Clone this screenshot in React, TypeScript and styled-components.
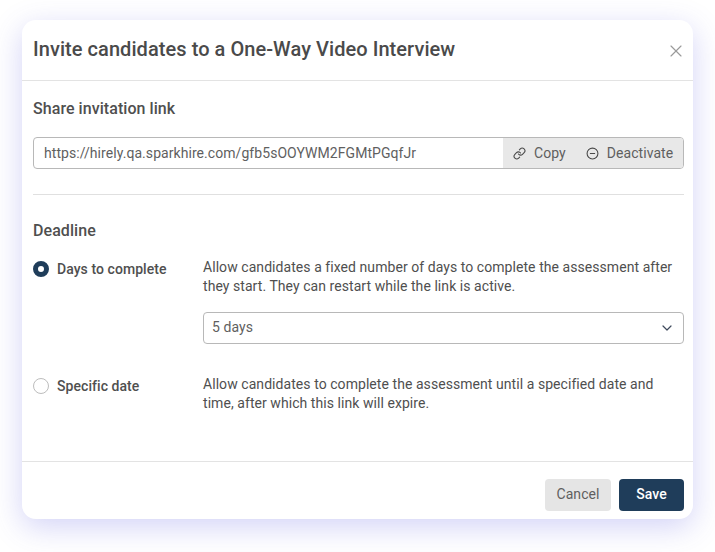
import React from "react";
import styled, { createGlobalStyle } from "styled-components";
import { ChevronDown, CircleMinus, Link, X } from "lucide-react";

const GlobalStyle = createGlobalStyle`
  html, body {
    margin: 0;
    background: #fff;
    font-family: Roboto, "Liberation Sans", sans-serif;
    letter-spacing: 0.06px;
    color: #454545;
  }
  * { box-sizing: border-box; }
`;

const Page = styled.div`
  width: 715px;
  height: 552px;
  padding: 20px 22px 33px;
  overflow: hidden;
`;

const Modal = styled.div`
  display: flex;
  flex-direction: column;
  width: 671px;
  height: 499px;
  background: #fff;
  border-radius: 14px;
  box-shadow: 0 8px 30px rgba(80, 80, 225, 0.25);
`;

const Header = styled.header`
  display: flex;
  align-items: center;
  justify-content: space-between;
  height: 61px;
  padding: 0 7px 3px 11px;
  border-bottom: 1px solid #e3e3e3;
`;

const Title = styled.h1`
  margin: 0;
  font-size: 20px;
  line-height: 28px;
  font-weight: 500;
  letter-spacing: inherit;
  color: #4a4a4a;
`;

const CloseButton = styled.button`
  display: flex;
  padding: 0;
  margin-top: 4px;
  border: 0;
  background: none;
  color: #9a9a9a;
`;

const Body = styled.main`
  flex: 1;
  padding: 18px 9px 0 11px;
`;

const SectionTitle = styled.h2`
  margin: 0;
  font-size: 16px;
  line-height: 20px;
  font-weight: 500;
  color: #4f4f4f;
`;

const LinkField = styled.div`
  display: flex;
  height: 32px;
  margin-top: 18px;
  border: 1px solid #b8b8b8;
  border-radius: 4px;
  overflow: hidden;
  font-size: 14px;
`;

const LinkText = styled.div`
  flex: 1;
  padding-left: 10px;
  line-height: 30px;
  color: #5f5f5f;
`;

const LinkActions = styled.div`
  display: flex;
  align-items: center;
  gap: 20px;
  width: 180px;
  padding-left: 10px;
  background: #e8e8e8;
`;

const LinkAction = styled.span`
  display: flex;
  align-items: center;
  gap: 8px;
  color: #5f5f5f;
`;

const Divider = styled.hr`
  height: 1px;
  margin: 25px 0 26px;
  border: 0;
  background: #e0e0e0;
`;

const OptionRow = styled.div<{ $top: number }>`
  display: grid;
  grid-template-columns: 170px 1fr;
  margin-top: ${({ $top }) => $top}px;
`;

const OptionLabel = styled.label`
  display: flex;
  align-items: center;
  gap: 8px;
  height: 22px;
  font-size: 14px;
  font-weight: 500;
  color: #4f4f4f;
`;

const Radio = styled.span<{ $checked?: boolean }>`
  width: 16px;
  height: 16px;
  border-radius: 50%;
  background: #fff;
  border: ${({ $checked }) =>
    $checked ? "5px solid #1f3d5a" : "1px solid #bdbdbd"};
`;

const OptionText = styled.p`
  margin: 0;
  font-size: 14px;
  line-height: 19px;
  color: #4f4f4f;
`;

const Select = styled.div`
  display: flex;
  align-items: center;
  justify-content: space-between;
  height: 32px;
  margin-top: 16px;
  padding: 0 8px 2px 8px;
  border: 1px solid #b8b8b8;
  border-radius: 4px;
  font-size: 14px;
  color: #5f5f5f;
`;

const Footer = styled.footer`
  display: flex;
  justify-content: flex-end;
  gap: 8px;
  height: 58px;
  padding: 17px 9px 0 0;
  border-top: 1px solid #e3e3e3;
`;

const Button = styled.button<{ $primary?: boolean }>`
  width: ${({ $primary }) => ($primary ? 65 : 66)}px;
  height: 32px;
  padding: 0 0 2px;
  border: 0;
  border-radius: 4px;
  font-family: inherit;
  font-size: 14px;
  letter-spacing: inherit;
  font-weight: ${({ $primary }) => ($primary ? 500 : 400)};
  color: ${({ $primary }) => ($primary ? "#fff" : "#5f5f5f")};
  background: ${({ $primary }) => ($primary ? "#1f3d5a" : "#e5e5e5")};
`;

export default function App() {
  return (
    <Page>
      <GlobalStyle />
      <Modal>
        <Header>
          <Title>Invite candidates to a One-Way Video Interview</Title>
          <CloseButton>
            <X size={20} strokeWidth={1.4} />
          </CloseButton>
        </Header>
        <Body>
          <SectionTitle>Share invitation link</SectionTitle>
          <LinkField>
            <LinkText>https://hirely.qa.sparkhire.com/gfb5sOOYWM2FGMtPGqfJr</LinkText>
            <LinkActions>
              <LinkAction>
                <Link size={13} strokeWidth={2} color="#4a4a4a" />
                Copy
              </LinkAction>
              <LinkAction>
                <CircleMinus size={13} strokeWidth={2} color="#4a4a4a" />
                Deactivate
              </LinkAction>
            </LinkActions>
          </LinkField>
          <Divider />
          <SectionTitle>Deadline</SectionTitle>
          <OptionRow $top={17}>
            <OptionLabel>
              <Radio $checked />
              Days to complete
            </OptionLabel>
            <div>
              <OptionText>
                Allow candidates a fixed number of days to complete the assessment after
                they start. They can restart while the link is active.
              </OptionText>
              <Select>
                5 days
                <ChevronDown size={16} strokeWidth={1.8} color="#3f4a5c" style={{ marginTop: 2 }} />
              </Select>
            </div>
          </OptionRow>
          <OptionRow $top={31}>
            <OptionLabel>
              <Radio />
              Specific date
            </OptionLabel>
            <OptionText>
              Allow candidates to complete the assessment until a specified date and
              time, after which this link will expire.
            </OptionText>
          </OptionRow>
        </Body>
        <Footer>
          <Button>Cancel</Button>
          <Button $primary>Save</Button>
        </Footer>
      </Modal>
    </Page>
  );
}
